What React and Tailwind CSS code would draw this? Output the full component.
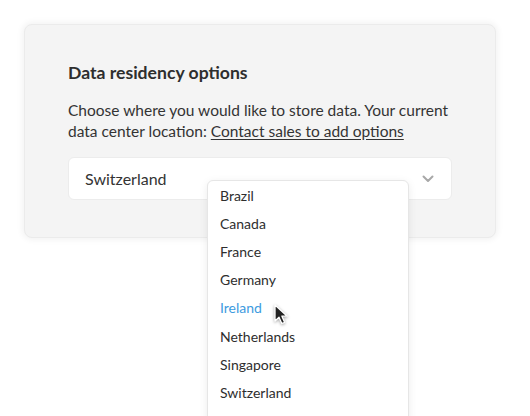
import React from "react";

// Country options shown in the open dropdown
const countries = [
  "Brazil",
  "Canada",
  "France",
  "Germany",
  "Ireland",
  "Netherlands",
  "Singapore",
  "Switzerland",
  "United Kingdom",
];

const Cursor = () => (
  <svg
    width="18"
    height="22"
    viewBox="0 0 18 22"
    className="absolute left-[273px] top-[304px]"
    style={{ filter: "drop-shadow(0 1px 1.5px rgba(0,0,0,0.35))" }}
  >
    <path
      d="M2 1 L2 17 L6 13.2 L8.8 19.5 L11.6 18.3 L8.9 12.2 L14.2 12.2 Z"
      fill="#222"
      stroke="#fff"
      strokeWidth="1.3"
      strokeLinejoin="round"
    />
  </svg>
);

const App = () => {
  return (
    <div
      className="relative w-[530px] h-[416px] overflow-hidden bg-white"
      style={{ fontFamily: "Lato, 'Noto Sans', sans-serif" }}
    >
      <div className="pt-6 pl-6">
        {/* Card */}
        <div className="w-[472px] h-[214px] rounded-lg bg-[#f4f4f4] border border-[#ebebeb] shadow-[0_0_6px_2px_rgba(0,0,0,0.05)] pt-[36px] pl-[43px] pr-[30px]">
          <h2 className="text-[17.6px] leading-6 font-bold text-[#2e2e2e]">
            Data residency options
          </h2>
          <p className="mt-[15px] text-[15.5px] leading-[21px] text-[#333]">
            Choose where you would like to store data. Your current data center
            location:{" "}
            <span className="underline underline-offset-2">
              Contact sales to add options
            </span>
          </p>

          {/* Select */}
          <div className="mt-[15px] mr-[13px] h-[43px] rounded-md bg-white border border-[#ececec] flex items-center justify-between pl-4 pr-4">
            <span className="text-[16px] text-[#333]">Switzerland</span>
            <svg width="12" height="8" viewBox="0 0 12 8" className="mr-[1px]">
              <path
                d="M1.5 1.5 L6 6 L10.5 1.5"
                fill="none"
                stroke="#a8a8a8"
                strokeWidth="2"
                strokeLinecap="round"
                strokeLinejoin="round"
              />
            </svg>
          </div>
        </div>
      </div>

      {/* Dropdown menu */}
      <div className="absolute left-[207px] top-[180px] w-[202px] h-[260px] bg-white rounded-md border border-[#e6e6e6] shadow-[0_2px_8px_rgba(0,0,0,0.08)]">
        {countries.map((c) => (
          <div
            key={c}
            className={`h-[28.2px] flex items-center pl-3 text-[14px] ${
              c === "Ireland" ? "text-[#3d9be0]" : "text-[#2e2e2e]"
            }`}
          >
            {c}
          </div>
        ))}
      </div>

      <Cursor />
    </div>
  );
};

export default App;
